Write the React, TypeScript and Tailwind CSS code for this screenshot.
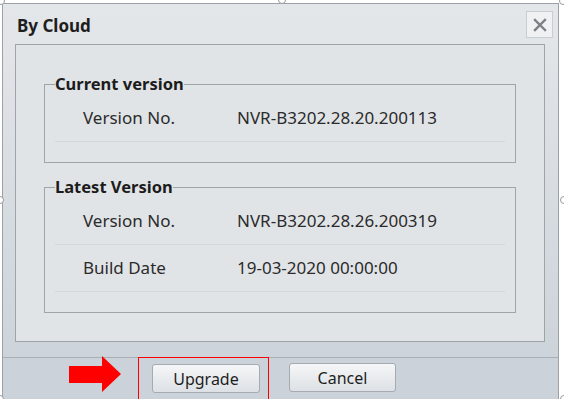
import React from 'react';

const font = { fontFamily: '"Noto Sans", "Open Sans", sans-serif' };

interface Row {
  label: string;
  value: string;
}

function VersionGroup({ title, rows, className }: { title: string; rows: Row[]; className?: string }) {
  return (
    <fieldset className={`w-[472px] border border-[#9fa4a9] px-[10px] pb-[20px] ${className ?? ''}`}>
      <legend className="px-0 text-[16.5px] leading-[22px] font-bold text-[#1c1c1c]">{title}</legend>
      {rows.map((r) => (
        <div key={r.label} className="h-[47px] flex items-center border-b border-[#d3d7db] text-[17px] text-[#2b2b2b]">
          <span className="pl-[28px] w-[182px]">{r.label}</span>
          <span>{r.value}</span>
        </div>
      ))}
    </fieldset>
  );
}

function Handle({ className }: { className: string }) {
  return <div className={`absolute w-[8px] h-[8px] rounded-full bg-white border border-[#9a9a9a] ${className}`} />;
}

export default function App() {
  return (
    <div className="relative w-[564px] h-[399px] bg-white overflow-hidden" style={font}>
      <div className="ml-[2px] mt-[3px] w-[557px] h-[400px] border border-[#9ba1a7] bg-gradient-to-b from-[#e4e7ea] to-[#cad1d8] flex flex-col">
        {/* title bar */}
        <div className="h-[40px] shrink-0 flex items-center justify-between pl-[14px] pr-[5px]">
          <span className="text-[17px] font-bold text-[#1e1e1e] mt-[4px]">By Cloud</span>
          <button className="w-[27px] h-[27px] mt-[1px] flex items-center justify-center bg-[#eff1f3] border border-[#c9cdd2]">
            <svg width="14" height="14" viewBox="0 0 14 14">
              <path d="M2 2L12 12M12 2L2 12" stroke="#7b8086" strokeWidth="2.4" strokeLinecap="square" />
            </svg>
          </button>
        </div>

        {/* content panel */}
        <div className="px-[12px] shrink-0">
          <div className="w-[530px] h-[298px] border border-[#9fa4a9] bg-[#e1e4e7] pt-[28px] pl-[28px]">
            <VersionGroup title="Current version" rows={[{ label: 'Version No.', value: 'NVR-B3202.28.20.200113' }]} />
            <VersionGroup
              className="mt-[13px]"
              title="Latest Version"
              rows={[
                { label: 'Version No.', value: 'NVR-B3202.28.26.200319' },
                { label: 'Build Date', value: '19-03-2020 00:00:00' },
              ]}
            />
          </div>
        </div>

        {/* footer */}
        <div className="mt-[15px] border-t border-[#a9afb5] bg-[#cbd2d9] flex-1 flex items-start pt-[5px]">
          <div className="ml-[66px] w-[52px] h-[36px] mt-[-7px] flex items-center">
            <svg width="52" height="36" viewBox="0 0 52 36">
              <path d="M0 10H33V0L52 18L33 36V27H0Z" fill="#ff0000" />
            </svg>
          </div>
          <div className="ml-[17px] -mt-[6px] w-[131px] h-[50px] border border-[#ff0000] flex items-start pt-[6px] pl-[13px]">
            <button className="w-[108px] h-[29px] rounded-[3px] border border-[#a6abb1] bg-gradient-to-b from-[#f5f6f7] to-[#dde1e5] text-[16px] text-[#1e1e1e]">
              Upgrade
            </button>
          </div>
          <button className="ml-[20px] w-[107px] h-[29px] rounded-[3px] border border-[#a6abb1] bg-gradient-to-b from-[#f5f6f7] to-[#dde1e5] text-[16px] text-[#1e1e1e]">
            Cancel
          </button>
        </div>
      </div>

      {/* selection handles */}
      <Handle className="-left-[3px] -top-[3px]" />
      <Handle className="left-[278px] -top-[4px]" />
      <Handle className="right-[-3px] -top-[3px]" />
      <Handle className="-left-[4px] top-[196px]" />
      <Handle className="right-[-4px] top-[196px]" />
      <Handle className="-left-[4px] bottom-[-4px]" />
      <Handle className="right-[-4px] bottom-[-4px]" />
    </div>
  );
}
